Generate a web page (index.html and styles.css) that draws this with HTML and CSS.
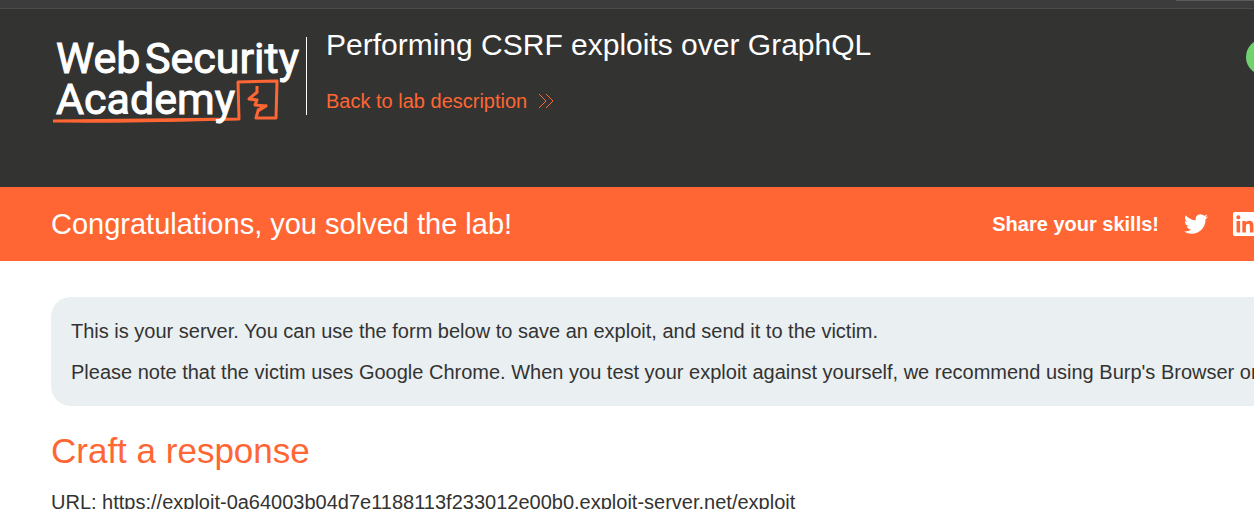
FILE: index.html
```html
<!DOCTYPE html>
<html lang="en">
<head>
<meta charset="utf-8">
<title>Performing CSRF exploits over GraphQL</title>
<link rel="stylesheet" href="styles.css">
</head>
<body>
<div class="topbar"><div class="topbar-field"></div></div>
<header class="lab-header">
  <svg class="logo" width="250" height="96" viewBox="0 0 250 96" role="img" aria-label="Web Security Academy">
    <g class="logo-mark">
      <path d="M1 92 Q90 91 187 90 L186 53 L225 52 L224 89 L204 89 L206 82 L214 77 L203 76 L205 71 L197 70 L205 63 L205 57" />
      <path class="logo-thin" d="M2 92 Q60 94 186 90 M197 70 L206 63 M205 81 L215 76" />
    </g>
    <g class="logo-text">
      <text x="4" y="44">Web</text>
      <text x="93" y="44">Security</text>
      <text x="4" y="85">Academy</text>
    </g>
  </svg>
  <div class="title-block">
    <h2 class="title">Performing CSRF exploits over GraphQL</h2>
    <a class="back-link" href="#">Back to lab description
      <svg width="16" height="16" viewBox="0 0 16 16" aria-hidden="true"><path d="M1 1 L8 8 L1 15 M8 1 L15 8 L8 15"/></svg>
    </a>
  </div>
  <div class="status"></div>
</header>
<section class="solved">
  <h4 class="solved-text">Congratulations, you solved the lab!</h4>
  <div class="share">
    <span class="share-label">Share your skills!</span>
    <a href="#" aria-label="Twitter"><svg width="24" height="24" viewBox="0 0 24 24"><path d="M23.953 4.57a10 10 0 01-2.825.775 4.958 4.958 0 002.163-2.723c-.951.555-2.005.959-3.127 1.184a4.92 4.92 0 00-8.384 4.482C7.69 8.095 4.067 6.13 1.64 3.162a4.822 4.822 0 00-.666 2.475c0 1.71.87 3.213 2.188 4.096a4.904 4.904 0 01-2.228-.616v.06a4.923 4.923 0 003.946 4.827 4.996 4.996 0 01-2.212.085 4.936 4.936 0 004.604 3.417 9.867 9.867 0 01-6.102 2.105c-.39 0-.779-.023-1.17-.067a13.995 13.995 0 007.557 2.209c9.053 0 13.998-7.496 13.998-13.985 0-.21 0-.42-.015-.63A9.935 9.935 0 0024 4.59z"/></svg></a>
    <a href="#" aria-label="LinkedIn"><svg width="24" height="24" viewBox="0 0 24 24"><path d="M20.447 20.452h-3.554v-5.569c0-1.328-.027-3.037-1.852-3.037-1.853 0-2.136 1.445-2.136 2.939v5.667H9.351V9h3.414v1.561h.046c.477-.9 1.637-1.85 3.37-1.85 3.601 0 4.267 2.37 4.267 5.455v6.286zM5.337 7.433a2.062 2.062 0 01-2.063-2.065 2.064 2.064 0 112.063 2.065zm1.782 13.019H3.555V9h3.564v11.452zM22.225 0H1.771C.792 0 0 .774 0 1.729v20.542C0 23.227.792 24 1.771 24h20.451C23.2 24 24 23.227 24 22.271V1.729C24 .774 23.2 0 22.222 0h.003z"/></svg></a>
  </div>
</section>
<main class="content">
  <div class="notice">
    <p>This is your server. You can use the form below to save an exploit, and send it to the victim.</p>
    <p>Please note that the victim uses Google Chrome. When you test your exploit against yourself, we recommend using Burp's Browser or</p>
  </div>
  <h3 class="heading">Craft a response</h3>
  <p class="url">URL: https://exploit-0a64003b04d7e1188113f233012e00b0.exploit-server.net/exploit</p>
</main>
</body>
</html>
```
FILE: styles.css
```css
* { box-sizing: border-box; }
body {
  margin: 0;
  overflow: hidden;
  background: #fff;
  color: #333332;
  font: 20px/24px "Liberation Sans", Arial, sans-serif;
  white-space: nowrap;
}
h2, h3, h4, p { margin: 0; font-weight: 400; }
.topbar {
  display: flex;
  justify-content: flex-end;
  height: 9px;
  background: #3c3c3c;
  border-bottom: 1px solid #4b4b4b;
}
.topbar-field { width: 78px; height: 1px; background: #5c5c5c; }
.lab-header {
  display: flex;
  align-items: flex-start;
  height: 178px;
  padding: 20px 0 0 52px;
  background: #333332;
  overflow: hidden;
}
.logo { flex: none; overflow: visible; }
.logo-text {
  fill: #fff;
  stroke: #fff;
  stroke-width: 1;
  font: 400 43px Roboto, sans-serif;
}
.logo-mark path {
  fill: none;
  stroke: #ff6633;
  stroke-width: 3;
  stroke-linejoin: round;
}
.logo-mark .logo-thin { stroke-width: 2; }
.title-block {
  height: 78px;
  margin-top: 8px;
  margin-left: 4px;
  padding-left: 19px;
  border-left: 1px solid #fff;
}
.title { margin-top: -10px; color: #fff; font-size: 30px; line-height: 36px; }
.back-link {
  display: flex;
  align-items: center;
  gap: 11px;
  margin-top: 26px;
  color: #ff6633;
  text-decoration: none;
}
.back-link path { fill: none; stroke: #ff6633; stroke-width: 1; }
.status {
  flex: none;
  width: 36px;
  height: 36px;
  margin: 10px -28px 0 auto;
  border-radius: 18px;
  background: #6fd26f;
}
.solved {
  display: flex;
  align-items: center;
  justify-content: space-between;
  height: 74px;
  padding-left: 51px;
  background: #ff6633;
  color: #fff;
}
.solved-text { font-size: 29px; line-height: 36px; }
.share { display: flex; align-items: center; gap: 25px; margin-right: -3px; }
.share-label { font-weight: 700; }
.share svg { display: block; fill: #fff; }
.content { padding: 36px 0 0 51px; }
.notice {
  display: grid;
  gap: 17px;
  padding: 22px 0 22px 20px;
  border-radius: 20px 0 0 20px;
  background: #eaeff2;
  overflow: hidden;
}
.heading { margin-top: 24px; color: #ff6633; font-size: 35px; line-height: 42px; }
.url { margin-top: 18px; }
```
